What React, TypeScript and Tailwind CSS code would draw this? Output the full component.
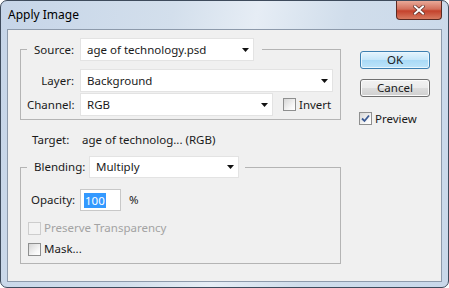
import React from "react";

function Arrow() {
  return (
    <svg width="7" height="4" viewBox="0 0 7 4" className="shrink-0">
      <path d="M0 0h7L3.5 4z" fill="#111" />
    </svg>
  );
}

function Dropdown({ value, className }: { value: string; className: string }) {
  return (
    <div className={`flex items-center justify-between bg-white border border-[#e3e3e3] pl-[6px] pr-[4px] ${className}`}>
      <span className="truncate">{value}</span>
      <Arrow />
    </div>
  );
}

function Check({ checked, disabled }: { checked?: boolean; disabled?: boolean }) {
  return (
    <span
      className={`w-[13px] h-[13px] border flex items-center justify-center shrink-0 ${
        disabled
          ? "border-[#cdcdcd] bg-[#f3f3f3]"
          : "border-[#8e8f8f] bg-[linear-gradient(135deg,#d6d6d6,#f8f8f8_70%,#ffffff)]"
      }`}
    >
      {checked && (
        <svg width="9" height="9" viewBox="0 0 9 9">
          <path d="M1 4.5 3.5 7 8 1.5" fill="none" stroke="#3b5a94" strokeWidth="1.8" />
        </svg>
      )}
    </span>
  );
}

export default function App() {
  return (
    <div className="w-[449px] h-[288px] bg-white font-['Noto_Sans',sans-serif] text-[11.5px] text-[#1a1a1a]">
      <div className="w-full h-full rounded-[7px] border border-[#3e4b5c] bg-[linear-gradient(100deg,#c6d5e8,#d3dfec_35%,#e6edf5_52%,#d0ddeb_70%,#c9d8ea)] flex flex-col px-[6px] pb-[5px]">
        {/* title bar */}
        <div className="h-[28px] flex justify-between items-start">
          <span className="pl-[1px] pt-[6px] leading-[16px] text-[12px] text-black">Apply Image</span>
          <div className="w-[46px] h-[19px] rounded-b-[4px] border border-t-0 border-[#5b2a22] bg-[linear-gradient(180deg,#e9a998,#d2705c_45%,#c4422c_55%,#d77a60)] flex items-center justify-center">
            <svg width="12" height="10" viewBox="0 0 12 10">
              <path d="M2 1.5 10 8.5M10 1.5 2 8.5" stroke="#5a2a22" strokeWidth="3.4" strokeLinecap="square" />
              <path d="M2 1.5 10 8.5M10 1.5 2 8.5" stroke="#ffffff" strokeWidth="2" strokeLinecap="square" />
            </svg>
          </div>
        </div>

        {/* client area */}
        <div className="flex-1 border border-[#8d9aab] bg-[#f0f0f0] flex pl-[12px] pt-[8px]">
          <div className="w-[321px] flex flex-col">
            <fieldset className="border border-[#b4b4b4] px-[6px] pb-[3px] m-0 min-w-0">
              <legend className="flex items-center pr-[8px] p-0">
                <span className="w-[53px] text-right pr-[6px]">Source:</span>
                <Dropdown value="age of technology.psd" className="w-[174px] h-[23px]" />
              </legend>
              <div className="flex items-center mt-[8px]">
                <span className="w-[53px] text-right pr-[6px]">Layer:</span>
                <Dropdown value="Background" className="w-[253px] h-[23px]" />
              </div>
              <div className="flex items-center mt-[1px]">
                <span className="w-[53px] text-right pr-[6px]">Channel:</span>
                <Dropdown value="RGB" className="w-[193px] h-[23px]" />
                <span className="ml-[10px] flex items-center gap-[3px]">
                  <Check />
                  Invert
                </span>
              </div>
            </fieldset>

            <div className="flex items-center h-[16px] mt-[12px] pl-[12px]">
              <span className="w-[50px]">Target:</span>
              <span>age of technolog... (RGB)</span>
            </div>

            <fieldset className="border border-[#b4b4b4] px-[6px] m-0 mt-[8px] min-w-0 h-[108px]">
              <legend className="flex items-center pr-[6px] p-0">
                <span className="w-[62px] pl-[7px]">Blending:</span>
                <Dropdown value="Multiply" className="w-[150px] h-[22px]" />
              </legend>
              <div className="flex items-center mt-[11px]">
                <span className="w-[53px] pl-[4px]">Opacity:</span>
                <div className="w-[41px] h-[22px] bg-white border border-[#c8c8c8] flex items-center pl-[3px]">
                  <span className="bg-[#3399ff] text-white leading-[15px] px-[1px]">100</span>
                </div>
                <span className="ml-[8px]">%</span>
              </div>
              <div className="flex items-center gap-[3px] h-[20px] mt-[7px] pl-[1px] text-[#a3a3a3]">
                <Check disabled />
                Preserve Transparency
              </div>
              <div className="flex items-center gap-[3px] h-[20px] mt-[1px] pl-[1px]">
                <Check />
                Mask...
              </div>
            </fieldset>
          </div>

          <div className="ml-[19px] mt-[13px] flex flex-col w-[70px]">
            <button className="h-[18px] rounded-[3px] border border-[#3c7fb1] bg-[linear-gradient(180deg,#e5f4fd,#c4e6fa_50%,#a9d9f6_51%,#bde4fa)] shadow-[inset_0_0_0_1px_#e9f6fe] leading-none">
              OK
            </button>
            <button className="h-[18px] mt-[10px] rounded-[3px] border border-[#707070] bg-[linear-gradient(180deg,#f2f2f2,#ebebeb_50%,#dddddd_51%,#cfcfcf)] shadow-[inset_0_0_0_1px_#fbfbfb] leading-none">
              Cancel
            </button>
            <div className="flex items-center gap-[3px] mt-[13px] -ml-[1px]">
              <Check checked />
              Preview
            </div>
          </div>
        </div>
      </div>
    </div>
  );
}
